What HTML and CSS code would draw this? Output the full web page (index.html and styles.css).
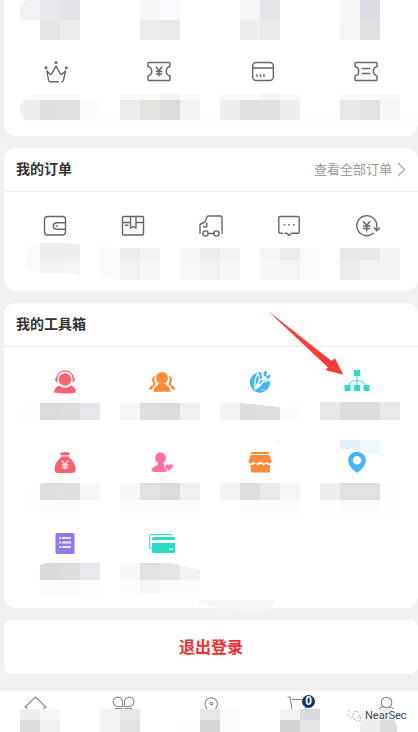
FILE: index.html
```html
<!DOCTYPE html>
<html lang="zh-CN">
<head>
<meta charset="utf-8">
<meta name="viewport" content="width=device-width">
<title>我的</title>
<link rel="stylesheet" href="styles.css">
</head>
<body>
<main class="page">
  <section class="card assets">
    <svg class="strip" width="414" height="40" viewBox="4 0 414 40" shape-rendering="crispEdges">
      <path fill="#f2f2f6" d="M26 0h14v20H20V7z"/><path fill="#e5e7ed" d="M40 0h20v20H40z"/><path fill="#e2e3e9" d="M60 0h20v20H60z"/><path fill="#e5e5e3" d="M40 20h20v20H40z"/><path fill="#ebebeb" d="M60 20h20v20H60z"/>
      <path fill="#f7f7f7" d="M140 0h20v20h-20z"/><path fill="#f9fafd" d="M160 0h20v20h-20z"/><path fill="#ececec" d="M140 20h20v20h-20z"/><path fill="#e9e9e9" d="M160 20h20v20h-20z"/>
      <path fill="#f7f7f7" d="M240 0h20v20h-20z"/><path fill="#e4e5eb" d="M260 0h20v20h-20z"/><path fill="#eee" d="M240 20h20v20h-20z"/><path fill="#eaeaea" d="M260 20h20v20h-20z"/>
      <path fill="#f7f7f7" d="M340 0h20v20h-20z"/><path fill="#dadde6" d="M360 0h20v20h-20z"/><path fill="#f6f6f6" d="M340 20h20v20h-20z"/><path fill="#e0e0e0" d="M360 20h20v20h-20z"/>
    </svg>
    <div class="icons asset-icons">
      <svg class="line" width="24" height="24" viewBox="0 0 24 24"><path d="M14.200 21.700H6.200Q4.800 21.700 4.500 20L2.900 11l3.300 3.300q1 .5 1.500-.5L12 6l4.300 7.800q.5 1 1.500.5L21.500 11l-2 9q-.3 1.700-1.800 1.700"/><g fill="#666" stroke="none"><circle cx="12" cy="2.500" r="1.500"/><circle cx="2" cy="7.700" r="1.500"/><circle cx="22.300" cy="7.700" r="1.500"/></g></svg>
      <svg class="line" width="24" height="24" viewBox="0 0 24 24"><path d="M2 2.500h20q1 0 1 1v3c-5 1.500-5 8 0 9.500v3.500q0 1-1 1H2q-1 0-1-1V16c5-1.500 5-8 0-9.500v-3q0-1 1-1zM9.300 7l2.700 4 2.700-4M12 11v5M9.200 11.500h5.600M9.200 14h5.600"/></svg>
      <svg class="line" width="24" height="24" viewBox="0 0 24 24"><rect x="1.700" y="2.500" width="20.600" height="18" rx="3.500"/><path d="M2 8h20M6 14.500v2M9.500 14.500v2M13 14.500v2"/></svg>
      <svg class="line" width="24" height="24" viewBox="0 0 24 24"><path d="M2 2.500h20q1 0 1 1v3c-5 1.500-5 8 0 9.500v3.500q0 1-1 1H2q-1 0-1-1V16c5-1.500 5-8 0-9.500v-3q0-1 1-1zM8.300 8.500h7.500M8.300 13.500h7.500"/></svg>
    </div>
    <svg class="strip asset-labels" width="414" height="32" viewBox="4 94 414 32" shape-rendering="crispEdges">
      <path fill="#fcfcfc" d="M22 118h396v8H38q-9 0-16-8z"/>
      <path fill="#fafafa" d="M34 94h46v6H25zM120 94h80v6h-80zM220 94h80v6h-80zM340 94h60v6h-60z"/>
      <path fill="#f5f5f5" d="M160 94h20v6h-20zM260 94h20v6h-20z"/>
      <path fill="#eeeeec" d="M25 100h15v20H25l-5-8v-7z"/><path fill="#dfdfdf" d="M40 100h20v20H40z"/><path fill="#e0e0e0" d="M60 100h20v20H60z"/><path fill="#fbfdfc" d="M80 100h20v20H80z"/>
      <path fill="#ebebeb" d="M120 100h20v20h-20z"/><path fill="#e1e1de" d="M140 100h20v20h-20z"/><path fill="#dbdbdb" d="M160 100h20v20h-20z"/><path fill="#f3f3f3" d="M180 100h20v20h-20z"/>
      <path fill="#efefed" d="M220 100h20v20h-20z"/><path fill="#dfe1e0" d="M240 100h20v20h-20z"/><path fill="#e0e0de" d="M260 100h20v20h-20z"/><path fill="#edf0ef" d="M280 100h20v20h-20z"/>
      <path fill="#e8e8e8" d="M340 100h20v20h-20z"/><path fill="#e1e1df" d="M360 100h20v20h-20z"/><path fill="#f4f6f5" d="M380 100h20v20h-20z"/>
    </svg>
  </section>

  <section class="card orders">
    <header class="head"><h2>我的订单</h2><a class="more">查看全部订单<svg width="9" height="15" viewBox="0 0 9 15"><path d="M1 1l6.500 6.500L1 14" fill="none" stroke="#aaa" stroke-width="1.200"/></svg></a></header>
    <div class="icons order-icons">
      <svg class="line" width="24" height="24" viewBox="0 0 24 24"><rect x="1.500" y="2.500" width="21" height="18.500" rx="3"/><path d="M22.500 8.700H14c-5 0-5 6.600 0 6.600h8.500M13.300 12h.8"/></svg>
      <svg class="line" width="24" height="24" viewBox="0 0 24 24"><rect x="1.500" y="2.500" width="21" height="18.500" rx="1"/><path d="M1.500 8.500H9.500M15 8.500h7.500M9.500 2.500v11.700l2.700-1.700 2.800 1.700V2.500M4.300 11.200h2.500"/></svg>
      <svg class="line" width="24" height="24" viewBox="0 0 24 24"><path d="M1 19.500v-9l5-2.500 2-5q.4-1 1.500-1h12q1.500 0 1.500 1.500v16M7.800 9v3.700H4.500M10 19.500h5"/><circle cx="6.500" cy="19.500" r="2.600"/><circle cx="17.500" cy="19.500" r="2.600"/></svg>
      <svg class="line" width="24" height="24" viewBox="0 0 24 24"><path d="M5.500 19.300H3q-1.200 0-1.200-1.200V3.700q0-1.200 1.200-1.200h18q1.200 0 1.200 1.200v14.400q0 1.200-1.200 1.200h-6.500L12 21.500l-2-2.200H8"/><path stroke-width="1.600" d="M7.200 10.700h.4M11.900 10.700h.4M16.600 10.700h.4"/></svg>
      <svg class="line" width="24" height="24" viewBox="0 0 24 24"><path d="M18.300 19.300A10 10 0 1 1 21.800 11.500V17M19.400 13.800l2.400 3 2.800-2.800M8.500 7.500l3.200 4 3.200-4M11.700 11.500V17M8.500 12h6.400M8.500 14.500h6.400"/></svg>
    </div>
    <svg class="strip" width="414" height="38" viewBox="4 243 414 38" shape-rendering="crispEdges">
      <path fill="#fafafa" d="M40 243v30q-15-2-15-15t15-15z"/><path fill="#ededed" d="M40 243h20v17H40z"/><path fill="#efefef" d="M60 243h6l14 1v16H60z"/><path fill="#f3f3f3" d="M40 260h20v13H40z"/><path fill="#f5f5f5" d="M60 260h20v15l-16-2h-4z"/>
      <path fill="#fafafa" d="M100 246l20 2v32l-20-2z"/><path fill="#ececec" d="M120 248h20v12h-20z"/><path fill="#f2f2f2" d="M140 248h20v12h-20zM120 260h20v20h-20z"/><path fill="#f7f7f7" d="M140 260h20v20h-20z"/>
      <path fill="#f8f8f6" d="M180 248h20v12h-20z"/><path fill="#ededed" d="M200 248h20v12h-20z"/><path fill="#f2f2f2" d="M220 248h20v12h-20zM200 260h20v20h-20z"/><path fill="#f9f9f9" d="M180 260h20v20h-20z"/><path fill="#f7f7f7" d="M220 260h20v20h-20z"/>
      <path fill="#f5f5f3" d="M260 248h20v12h-20z"/><path fill="#ebebeb" d="M280 248h20v12h-20z"/><path fill="#fafafa" d="M300 248h20v32h-20z"/><path fill="#f7f8f8" d="M260 260h20v20h-20z"/><path fill="#f3f5f8" d="M280 260h20v20h-20z"/>
      <path fill="#e8e8e8" d="M340 248h20v12h-20z"/><path fill="#e7e9e8" d="M360 248h20v12h-20z"/><path fill="#f3f5f5" d="M380 248h20v12h-20z"/><path fill="#ebebeb" d="M340 260h20v20h-20z"/><path fill="#f2f2f0" d="M360 260h20v20h-20z"/><path fill="#f2f3f5" d="M380 260h20v20h-20z"/>
    </svg>
  </section>

  <section class="card tools">
    <header class="head"><h2>我的工具箱</h2></header>
    <div class="icons tool-icons">
      <svg width="26" height="26" viewBox="0 0 26 26" fill="#ff5f76"><circle cx="13" cy="10.500" r="6.200"/><path d="M7 16.500q6 4.500 12 0 4.500 1.500 5 7-11 2-22 0 .5-5.500 5-7z"/><path d="M4.800 9C6-.5 20-.5 21.200 9" fill="none" stroke="#ff5f76" stroke-width="1.200"/><path d="M5.500 7.500v6Q3 12.500 3 10.500t2.500-3zM20.500 7.500v6q2.500-1 2.500-3t-2.500-3z"/></svg>
      <svg width="26" height="26" viewBox="0 0 26 26" fill="#ff8a36"><circle cx="13" cy="9" r="6"/><path d="M9 14.500h8q-.5 1.500 1 2.300 3.500 1.500 3.500 6H4.500q0-4.500 3.500-6 1.500-.8 1-2.300zM5.800 6.500Q1 9 4.300 14.300L3.800 16Q0 17 0 20.500h3q.3-3 3-4.500 1.500-.8 0-2.300Q4.500 10 5.800 6.500zM20.200 6.500q4.800 2.500 1.500 7.800l.5 1.700Q26 17 26 20.500h-3q-.3-3-3-4.500-1.500-.8 0-2.300 1.500-3.700.2-7.200z"/></svg>
      <svg width="26" height="26" viewBox="0 0 26 26"><circle cx="13" cy="13.500" r="10.200" fill="#42b8f7"/><path d="M14 0h12v11.500l-5.500-1L17 12l-2-2.500z" fill="#fff"/><path d="M8 20.500Q7 11 10.500 4.500 15.500 9 8 20.500 11 11 16 9.500q1.500 5-8 11Q14 12 23 11.500" fill="none" stroke="#fff" stroke-width="1.200"/><g fill="#42b8f7"><ellipse cx="18.200" cy="4.800" rx="1.700" ry="2.900" transform="rotate(15 18.200 4.800)"/><ellipse cx="21.300" cy="7.800" rx="2.400" ry="1.500" transform="rotate(-25 21.300 7.800)"/></g><path d="M14 21.500q2-1.500 4.500-.3" fill="none" stroke="#c9eaff"/></svg>
      <svg width="26" height="26" viewBox="0 0 26 26"><path d="M13 6v12M4.500 18q0-6.500 8.500-6.500t8.500 6.500" fill="none" stroke="#55dfcf" stroke-width="1.200"/><path fill="#2cdcc8" d="M10 1h6v6h-6zM.5 16h6v6h-6zM10 16h6v6h-6zM19.500 16h6v6h-6z"/></svg>
    </div>
    <svg class="strip" width="414" height="21" viewBox="4 400 414 21" shape-rendering="crispEdges">
      <path fill="#fefefd" d="M22 403h18v17H19z"/><path fill="#dbdbdb" d="M40 403h20v17H40z"/><path fill="#ddd" d="M60 403h20v17H60z"/><path fill="#e5e6e9" d="M80 403h20v17H80z"/>
      <path fill="#f6f6f6" d="M120 403h20v17h-20z"/><path fill="#dedede" d="M140 403h20v17h-20z"/><path fill="#dcdcdc" d="M160 403h20v17h-20z"/><path fill="#eff1f0" d="M180 403h20v17h-20z"/>
      <path fill="#f3f3f2" d="M220 403h20v17h-20z"/><path fill="#dcdddc" d="M240 403l20 2v15h-20z"/><path fill="#dfdfdf" d="M260 405l20 2v13h-20z"/><path fill="#fafbfb" d="M280 408h5l15-5v17h-20z"/>
      <path fill="#e9e8e7" d="M320 402h20v18h-20z"/><path fill="#dcdcdc" d="M340 402h40v18h-40z"/><path fill="#e9e9e9" d="M380 402h20v18h-20z"/>
    </svg>
    <svg class="strip upper-strip" width="414" height="15" viewBox="4 440 414 15" shape-rendering="crispEdges"><path fill="#ffeadf" d="M277 440h3v1h-3z"/><path fill="#e2f3fd" d="M340 440h20v11l-20-2z"/><path fill="#eff7fe" d="M360 440h20v15l-20-4z"/></svg>
    <div class="icons second-icons">
      <svg width="26" height="26" viewBox="0 0 26 26"><path fill="#ff5f71" d="M8 3q5-2 10 0l-1.500 4q7 4.500 7 12.500 0 3.500-4 3.500h-13q-4 0-4-3.500Q2.500 11.500 9.500 7z"/><path d="M7 5.800h12M9.800 10.500l3.200 4 3.200-4M13 14.500V20M9.800 15h6.400M9.800 17.500h6.400" fill="none" stroke="#ffe5e5" stroke-width="1.300"/></svg>
      <svg width="26" height="26" viewBox="0 0 26 26" fill="#ff6fa6"><ellipse cx="11.500" cy="8" rx="5.400" ry="5.800"/><path d="M9 12.500h5q0 3 4 3.500v5.300Q11 23 2.500 21.300q0-4 4.500-5.300 2-1 2-3.500z"/><path stroke="#fff" d="M20 21.500l-4-4q-1-2.500 1-3.500 1.800-.7 3 1 1.200-1.700 3-1 2 1 1 3.500z"/></svg>
      <svg width="26" height="26" viewBox="0 0 26 26" fill="#ff8b38"><path d="M4 2h18v2H4zM3.500 5h19L24.500 11.500q0 2-2 2-1.500 0-3-2l-2 2h-1l-3.300-2-3.300 2h-1l-2.500-2q-1.500 2-3 2-2 0-2-2z"/><path d="M3.500 15H6l2-1.500 3 2 2.500-2 3 2 2.500-2 2 1.500h2v7.500h-19z"/></svg>
      <svg width="26" height="26" viewBox="0 0 26 26"><path fill="#42b7f8" fill-rule="evenodd" d="M13 1.700c5 0 8.900 3.600 8.900 8.500 0 4.500-4 9-8.900 12.700-4.900-3.700-8.900-8.200-8.900-12.700C4.100 5.300 8 1.700 13 1.700zm0 4.200a4.300 4.300 0 1 0 0 8.600 4.300 4.300 0 0 0 0-8.600z"/></svg>
    </div>
    <svg class="strip" width="414" height="33" viewBox="4 483 414 33" shape-rendering="crispEdges">
      <path fill="#fefefd" d="M40 484v31q-13-2-13-16t13-15z"/><path fill="#fdfdfd" d="M320 500h20v15h-20zM380 500h20v15h-20z"/>
      <path fill="#fcfcfc" d="M40 500h40v15H40zM120 500h80v15h-80zM240 500h60v15h-60zM340 500h40v15h-40z"/>
      <path fill="#dedede" d="M40 484l4-1h16v17H40z"/><path fill="#dfdfdd" d="M60 483h20v17H60z"/><path fill="#f7f7f7" d="M80 483h20v17H80z"/>
      <path fill="#f7f7f7" d="M120 483h20v17h-20z"/><path fill="#e1e1e1" d="M140 483h20v17h-20z"/><path fill="#dcdcdc" d="M160 483h20v17h-20z"/><path fill="#eff1f0" d="M180 483h20v17h-20z"/>
      <path fill="#f3f3f3" d="M220 483h20v17h-20z"/><path fill="#dedede" d="M240 483h20v17h-20z"/><path fill="#eaeaea" d="M260 483h20v17h-20z"/><path fill="#f6f6f6" d="M280 483h20v17h-20z"/>
      <path fill="#efefed" d="M320 483h20v17h-20z"/><path fill="#e1e1e1" d="M340 483h40v17h-40z"/><path fill="#fbfefd" d="M380 483h20v17h-20z"/>
    </svg>
    <div class="icons third-icons">
      <svg width="26" height="26" viewBox="0 0 26 26"><rect x="3.500" y="2" width="19" height="21" rx="1.500" fill="#9275fa"/><path fill="#eee9ff" d="M7 6h2v2H7zm3 0h9v2h-9zM7 10.500h2v2H7zm3 0h9v2h-9zM7 15h2v2H7zm3 0h9v2h-9z"/></svg>
      <svg width="26" height="26" viewBox="0 0 26 26"><path d="M3 17.500H2q-1.300 0-1.300-1.300V5Q.7 3.500 2 3.500h19q1.500 0 1.500 1.500" fill="none" stroke="#2cdac8"/><path fill="#2cdac8" d="M5 6h19.500q1.500 0 1.500 1.500V9H3V7.500Q3 6 5 6zM3 12h23v8.500q0 1.500-1.500 1.500H5q-2 0-2-1.500z"/><path fill="#d8fffa" d="M20 17.500h4V19h-4z"/></svg>
    </div>
    <svg class="strip" width="414" height="32" viewBox="4 563 414 32" shape-rendering="crispEdges">
      <path fill="#fdfdfd" d="M40 565v14h-7q1-9 7-14z"/><path fill="#fafafa" d="M40 580h40v15H45l-5-2z"/><path fill="#fdfdfd" d="M80 580h20v15H80z"/><path fill="#dadada" d="M40 565l5-2h15v17H40z"/><path fill="#ddd" d="M60 563h20v17H60z"/><path fill="#e8e9ec" d="M80 563h20v17H80z"/>
      <path fill="#f9f8f7" d="M120 563h20v17h-20z"/><path fill="#e2e2e2" d="M140 563h20v17h-20z"/><path fill="#e5e5e5" d="M160 563h11l9 2v15h-20z"/><path fill="#f2f4f4" d="M180 565l20 5v10h-20z"/><path fill="#fcfcfc" d="M120 580h80v15h-80z"/><path fill="#f7f7f7" d="M140 580h20v14h-20z"/>
    </svg>
  </section>

  <button class="card logout">退出登录</button>

  <nav class="tabs">
    <div class="tab-icons">
      <svg class="tab" width="24" height="18" viewBox="0 0 24 18"><path d="M4 18v-1.500l-2-.5L12.500 6 23 16l-2 .5V18"/></svg>
      <svg class="tab" width="24" height="18" viewBox="0 0 24 18"><path d="M11.500 15.500H7a4.700 4.700 0 1 1 4.500-4.500zM13.500 15.500H18a4.700 4.700 0 1 0-4.500-4.500zM4 17.500h7.500M13.500 17.500H21"/></svg>
      <svg class="tab" width="24" height="18" viewBox="0 0 24 18"><path d="M8 18q-2-3-2-5a6 6 0 0 1 12.500 0q0 2-2 5"/><circle cx="12.500" cy="12.500" r="1.300"/></svg>
      <svg class="tab" width="24" height="18" viewBox="0 0 24 18"><path d="M1.500 6H4L6 18M6 8.500h15L19.500 18"/></svg>
      <svg class="tab" width="24" height="18" viewBox="0 0 24 18"><circle cx="12.500" cy="11.500" r="5.300"/><path d="M5 18q3-2.500 5-2.500M15 16q3 .5 5.500 2.500"/></svg>
    </div>
    <svg class="strip" width="418" height="23" viewBox="0 709 418 23" shape-rendering="crispEdges">
      <path fill="#eee" d="M20 709h20v11H20z"/><path fill="#f7f7f7" d="M40 709h20v11H40z"/><path fill="#dcdcdc" d="M20 720h20v12H20z"/><path fill="#f0f0f0" d="M40 720h20v12H40z"/>
      <path fill="#f4f4f4" d="M100 709h20v23h-20z"/><path fill="#e7e7e7" d="M120 709h20v11h-20z"/><path fill="#e2e2e2" d="M120 720h20v12h-20z"/>
      <path fill="#fdfdfd" d="M180 720h20v12h-20z"/><path fill="#e6e6e6" d="M200 709h20v11h-20z"/><path fill="#d5d5d5" d="M200 720h20v12h-20z"/><path fill="#fafafa" d="M220 709h20v23h-20z"/>
      <path fill="#f3f3f3" d="M280 709h20v11h-20z"/><path fill="#d5d9e1" d="M300 709h20v11h-20z"/><path fill="#d4d4d4" d="M280 720h20v12h-20z"/><path fill="#e5e5e5" d="M300 720h20v12h-20z"/>
      <path fill="#f7f7f7" d="M360 709h20v11h-20z"/><path fill="#eee" d="M380 709h10l8 11h-18zM360 720h20v12h-20z"/><path fill="#dcdcdc" d="M380 720h14q4 5 3 12h-17z"/>
    </svg>
    <span class="badge">0</span>
    <div class="watermark"><svg width="16" height="14" viewBox="0 0 16 14"><path d="M2 1l1 2M1 5l2 3M5 8l-1 2M8 3q4-2 5 1M8 4q-3 4 1 7M12 6q4 1 2 6-4 1-5-2M11 8v1M14 8v1" fill="none" stroke="#999" stroke-width=".8" stroke-dasharray="2 1"/></svg><span>NearSec</span></div>
  </nav>
  <svg class="smear" width="76" height="16" viewBox="0 0 76 16"><path fill="#f6f6f6" d="M0 1h75v3q-5 11-20 11Q32 12 0 4z"/></svg>
  <svg class="arrow" width="78" height="68" viewBox="0 0 78 68"><path fill="#fc3b36" d="M1 1L64.500 51l3.500-2.700 8.200 16.500L58.300 60l2.700-2.500z"/></svg>
</main>
</body>
</html>
```
FILE: styles.css
```css
* { box-sizing: border-box; }
body { margin: 0; background: #f1f1f1; font-family: "Noto Sans CJK SC", sans-serif; }
svg { display: block; flex: none; }
.page { position: relative; width: 418px; height: 732px; overflow: hidden; display: flex; flex-direction: column; }
.card { flex: none; margin-left: 4px; width: 414px; background: #fff; border-radius: 12px; overflow: hidden; }
.assets { height: 136px; border-radius: 0 0 12px 12px; }
.orders { height: 143px; margin-top: 12px; }
.tools { height: 305px; margin-top: 12px; }
.icons { display: grid; justify-items: center; }
.line { fill: none; stroke: #666; stroke-width: 1.4; stroke-linecap: round; stroke-linejoin: round; overflow: visible; }
.asset-icons { grid-template-columns: repeat(4, 1fr); padding-top: 20px; }
.asset-labels { margin-top: 10px; }
.head { height: 44px; padding: 0 12px; border-bottom: 1px solid #ededed; display: flex; align-items: center; justify-content: space-between; }
h2 { margin: 0; padding-bottom: 3px; font-size: 14px; line-height: 20px; font-weight: 700; color: #333; }
.more { display: flex; align-items: center; gap: 5px; font-size: 13px; line-height: 18px; padding-bottom: 2px; color: #999; }
.more svg { margin-top: 2px; }
.order-icons { grid-template-columns: repeat(5, 78px); padding: 22px 12px 5px; }
.tool-icons, .second-icons, .third-icons { grid-template-columns: repeat(4, 97.5px); padding: 0 12px; }
.tool-icons { padding-top: 22px; padding-bottom: 5px; }
.upper-strip { margin-top: 19px; }
.second-icons { margin-top: -5px; padding-bottom: 7px; }
.third-icons { margin-top: 15px; padding-bottom: 6px; }
.logout { height: 54px; margin-top: 12px; border: 0; padding: 0 0 3px; border-radius: 8px; font: 700 16px/24px "Noto Sans CJK SC", sans-serif; color: #f92d2d; }
.tabs { position: relative; height: 41px; margin-top: 17px; background: #fff; flex: none; }
.tab-icons { display: flex; justify-content: space-between; padding: 0 20px 0 23px; }
.tab { fill: none; stroke: #888; stroke-width: 1.1; }
.badge { position: absolute; left: 302px; top: 4px; width: 13px; height: 13px; border-radius: 6.5px; background: #17345f; color: #fff; font: 700 12px/13px "Liberation Sans", sans-serif; text-align: center; }
.watermark { position: absolute; left: 346px; top: 18px; display: flex; align-items: center; gap: 3px; font: 11px/14px Roboto, sans-serif; letter-spacing: 0; color: #444; text-shadow: -1px 0 #fff, 0 -1px #fff; }
.smear { position: absolute; left: 199px; top: 599px; }
.arrow { position: absolute; left: 267px; top: 310px; }
```
